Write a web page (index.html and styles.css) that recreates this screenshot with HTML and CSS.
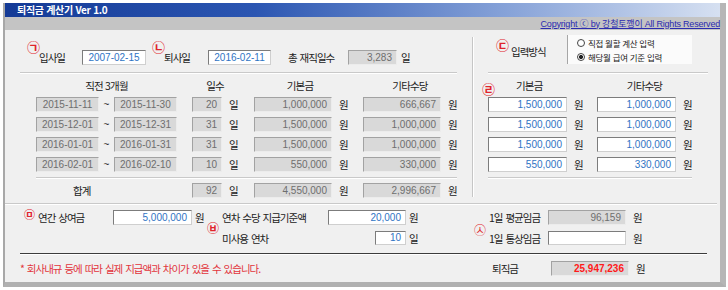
FILE: index.html
```html
<!DOCTYPE html>
<html lang="ko">
<head>
<meta charset="utf-8">
<title>퇴직금 계산기</title>
<link rel="stylesheet" href="styles.css">
</head>
<body>
<div class="window">
  <div class="titlebar">퇴직금 계산기 Ver 1.0</div>
  <div class="menubar"><span class="copy">Copyright ⓒ by 강철토깽이 All Rights Reserved</span></div>
  <div class="content">
    <div class="top">
      <div class="left">
        <div class="r1">
          <span class="mark m1">㉠</span><span class="lbl w43">입사일</span>
          <span class="box inp ctr w64">2007-02-15</span>
          <span class="mark m2">㉡</span><span class="lbl w44">퇴사일</span>
          <span class="box inp ctr w63">2016-02-11</span>
          <span class="lbl total-lbl">총 재직일수</span>
          <span class="box dis w49">3,283</span>
          <span class="unit u-r1">일</span>
        </div>
        <div class="sep sep-l1"></div>
        <div class="ltable">
          <span class="hd hd-period">직전 3개월</span>
          <span class="hd hd-days">일수</span>
          <span class="hd hd-base">기본금</span>
          <span class="hd hd-etc">기타수당</span>

          <span class="box dis ctr">2015-11-11</span><span class="tilde">~</span><span class="box dis ctr">2015-11-30</span><span></span>
          <span class="box dis">20</span><span class="unit">일</span>
          <span class="box dis">1,000,000</span><span class="unit">원</span>
          <span class="box dis">666,667</span><span class="unit">원</span>

          <span class="box dis ctr">2015-12-01</span><span class="tilde">~</span><span class="box dis ctr">2015-12-31</span><span></span>
          <span class="box dis">31</span><span class="unit">일</span>
          <span class="box dis">1,500,000</span><span class="unit">원</span>
          <span class="box dis">1,000,000</span><span class="unit">원</span>

          <span class="box dis ctr">2016-01-01</span><span class="tilde">~</span><span class="box dis ctr">2016-01-31</span><span></span>
          <span class="box dis">31</span><span class="unit">일</span>
          <span class="box dis">1,500,000</span><span class="unit">원</span>
          <span class="box dis">1,000,000</span><span class="unit">원</span>

          <span class="box dis ctr">2016-02-01</span><span class="tilde">~</span><span class="box dis ctr">2016-02-10</span><span></span>
          <span class="box dis">10</span><span class="unit">일</span>
          <span class="box dis">550,000</span><span class="unit">원</span>
          <span class="box dis">330,000</span><span class="unit">원</span>
        </div>
        <div class="sep sep-l2"></div>
        <div class="ltable ltotal">
          <span class="lbl sum-lbl">합계</span>
          <span class="box dis">92</span><span class="unit">일</span>
          <span class="box dis">4,550,000</span><span class="unit">원</span>
          <span class="box dis">2,996,667</span><span class="unit">원</span>
        </div>
      </div>
      <div class="vdiv"></div>
      <div class="right">
        <div class="rtop">
          <span class="mark m3">㉢</span><span class="lbl method-lbl">입력방식</span>
          <div class="radios">
            <div class="radio-row"><span class="rb"></span><span class="rtxt">직접 월할 계산 입력</span></div>
            <div class="radio-row"><span class="rb on"></span><span class="rtxt">해당월 급여 기준 입력</span></div>
          </div>
        </div>
        <div class="sep sep-r1"></div>
        <div class="rtable">
          <span class="hd hd-rbase"><span class="mark m4">㉣</span><span class="hd-txt">기본금</span></span>
          <span class="hd hd-retc">기타수당</span>

          <span class="box inp">1,500,000</span><span class="unit">원</span>
          <span class="box inp">1,000,000</span><span class="unit">원</span>

          <span class="box inp">1,500,000</span><span class="unit">원</span>
          <span class="box inp">1,000,000</span><span class="unit">원</span>

          <span class="box inp">1,500,000</span><span class="unit">원</span>
          <span class="box inp">1,000,000</span><span class="unit">원</span>

          <span class="box inp">550,000</span><span class="unit">원</span>
          <span class="box inp">330,000</span><span class="unit">원</span>
        </div>
        <div class="sep sep-r2"></div>
      </div>
    </div>
    <div class="sep sep-full"></div>
    <div class="lower">
      <div class="colA">
        <span class="mark m5">㉤</span><span class="lbl bonus-lbl">연간 상여금</span>
        <span class="box inp w79">5,000,000</span><span class="unit ua">원</span>
      </div>
      <div class="colB">
        <span class="mark m6">㉥</span>
        <span class="lbl">연차 수당 지급기준액</span>
        <span class="box inp">20,000</span><span class="unit ub">원</span>
        <span class="lbl">미사용 연차</span>
        <span class="box inp w31 short">10</span><span class="unit ub">일</span>
      </div>
      <div class="colC">
        <span class="mark m7">㉦</span>
        <span class="lbl">1일 평균임금</span>
        <span class="box dis">96,159</span><span class="unit uc">원</span>
        <span class="lbl">1일 통상임금</span>
        <span class="box inp short"></span><span class="unit uc">원</span>
      </div>
    </div>
    <div class="darkline"></div>
    <div class="footer">
      <span class="note">* 회사내규 등에 따라 실제 지급액과 차이가 있을 수 있습니다.</span>
      <span class="lbl result-lbl">퇴직금</span>
      <span class="box dis result">25,947,236</span><span class="unit uc">원</span>
    </div>
  </div>
</div>
</body>
</html>
```

FILE: styles.css
```css
* { box-sizing: border-box; }
html, body { margin: 0; padding: 0; }
body {
  background: #ffffff;
  font-family: "Noto Sans CJK KR", "Liberation Sans", sans-serif;
  font-size: 10px;
  color: #222;
}

.window {
  margin: 3px 0 0 3px;
  width: 723px;
  border-left: 2px solid #a8a8a8;
  border-right: 6px solid #b6b6b6;
  border-bottom: 5px solid #b0b0b0;
  background: #f0f0f0;
}

.titlebar {
  height: 14px;
  background: linear-gradient(to right, #143a96 0%, #2b56b2 35%, #86a2d8 70%, #d6e0f1 100%);
  color: #fff;
  font-weight: 700;
  font-size: 10px;
  line-height: 14px;
  padding-left: 12px;
  letter-spacing: -0.3px;
}

.menubar {
  height: 13px;
  background: #c4c4c4;
  display: flex;
  justify-content: flex-end;
  align-items: center;
}
.copy {
  color: #2b2bb0;
  text-decoration: underline;
  font-family: "Liberation Sans", "Noto Sans CJK KR", sans-serif;
  font-size: 9px;
  line-height: 12px;
  letter-spacing: -0.2px;
}

.content { height: 252px; display: flex; flex-direction: column; }
.top { height: 173px; display: flex; flex: none; }
.left { width: 467px; flex: none; }
.vdiv {
  width: 2px;
  margin: 7px 0 6px;
  border-left: 1px solid #c6c6c6;
  border-right: 1px solid #fff;
}
.right { flex: 1; }

/* generic bits */
.lbl {
  font-size: 10.5px;
  line-height: 13px;
  letter-spacing: -1px;
  word-spacing: 1px;
  color: #222;
  white-space: nowrap;
}
.unit {
  font-size: 10.5px;
  line-height: 15px;
  color: #222;
  padding-left: 6px;
}
.mark {
  color: #e0242c;
  font-size: 13px;
  line-height: 12px;
  font-weight: 700;
  width: 12px;
  flex: none;
}
.box {
  display: block;
  height: 15px;
  border: 1px solid;
  font-family: "Liberation Sans", sans-serif;
  font-size: 10px;
  line-height: 13px;
  padding: 0 4px;
  text-align: right;
  white-space: nowrap;
  overflow: hidden;
  flex: none;
}
.inp {
  background: #fff;
  border-color: #7c7c7c #cfcfcf #cfcfcf #7c7c7c;
  color: #2f74c4;
}
.dis {
  background: #d9d9d9;
  border-color: #a2a2a2 #ececec #ececec #a2a2a2;
  color: #6e6e6e;
}
.ctr { text-align: center; padding: 0 2px; }

.sep {
  height: 2px;
  border-top: 1px solid #c9c9c9;
  border-bottom: 1px solid #fff;
  flex: none;
}

/* first row */
.r1 {
  display: flex;
  align-items: center;
  height: 15px;
  margin-top: 20px;
  padding-left: 22px;
}
.r1 .mark { align-self: flex-start; margin-top: -9px; }
.m2 { margin-left: 6px; }
.w43 { width: 43px; }
.w44 { width: 44px; }
.w64 { width: 64px; }
.w63 { width: 63px; }
.w49 { width: 49px; }
.w79 { width: 79px; }
.w31 { width: 31px; justify-self: end; }
.total-lbl { margin-left: 17px; width: 60px; }
.u-r1 { padding-left: 4px; }

.sep-l1 { margin: 7px 0 0 15px; width: 437px; }

.ltable {
  display: grid;
  grid-template-columns: 63px 15px 63px 15px 30px 32px 78px 31px 78px 20px;
  grid-template-rows: 13px repeat(4, 15px);
  row-gap: 5px;
  margin: 5px 0 0 31px;
}
.hd {
  font-size: 10.5px;
  line-height: 13px;
  letter-spacing: -0.8px;
  text-align: center;
  white-space: nowrap;
  color: #222;
}
.hd-period { grid-column: 1 / 4; }
.hd-days { grid-column: 5 / 7; padding-right: 16px; }
.hd-base { grid-column: 7 / 9; padding-right: 17px; }
.hd-etc { grid-column: 9 / 11; padding-right: 4px; }
.tilde {
  text-align: center;
  font-family: "Liberation Sans", sans-serif;
  font-size: 10px;
  line-height: 15px;
  color: #333;
}
.ltable .unit { padding-left: 7px; }

.sep-l2 { margin: 5px 0 0 31px; width: 421px; }
.ltotal { grid-template-rows: 15px; margin-top: 4px; }
.sum-lbl { grid-column: 1 / 5; padding-left: 37px; line-height: 15px; }

/* right pane */
.rtop {
  display: flex;
  align-items: flex-start;
  height: 29px;
  margin-top: 5px;
}
.m3 { margin-left: 22px; margin-top: 4px; }
.method-lbl { margin-left: 3px; margin-top: 11px; width: 56px; line-height: 12px; }
.radios {
  width: 125px;
  height: 29px;
  background: #fbfbfb;
  border-left: 1px solid #a6a6a6;
  padding: 1px 0 0 9px;
}
.radio-row {
  display: flex;
  align-items: center;
  height: 14px;
}
.rb {
  width: 8px;
  height: 8px;
  border: 1px solid #444;
  border-radius: 50%;
  background: #fff;
  margin-right: 3px;
  flex: none;
}
.rb.on { background: radial-gradient(circle, #222 0 1.8px, #fff 2.3px); }
.rtxt {
  font-size: 8.5px;
  line-height: 12px;
  letter-spacing: -0.3px;
  color: #222;
  white-space: nowrap;
}

.sep-r1 { margin: 8px 0 0 14px; width: 220px; }
.rtable {
  display: grid;
  grid-template-columns: 79px 30px 79px 16px;
  grid-template-rows: 13px repeat(4, 15px);
  row-gap: 5px;
  margin: 5px 0 0 14px;
}
.rtable .unit { padding-left: 7px; }
.hd-rbase {
  grid-column: 1 / 3;
  display: flex;
  align-items: center;
  text-align: left;
}
.m4 { margin-left: -6px; align-self: flex-end; margin-bottom: -3px; }
.hd-txt { margin-left: 22px; }
.hd-retc { grid-column: 3 / 5; }
.sep-r2 { margin: 5px 0 0 14px; width: 204px; }

.sep-full { width: 712px; }

/* lower */
.lower {
  height: 48px;
  display: flex;
  align-items: flex-start;
  padding-top: 5px;
  flex: none;
}
.colA {
  display: flex;
  align-items: center;
  height: 15px;
  margin-left: 19px;
}
.m5 { font-size: 11px; width: 10px; line-height: 10px; align-self: flex-start; margin-top: -1px; }
.bonus-lbl { margin-left: 4px; width: 75px; line-height: 15px; }
.ua { padding-left: 3px; width: 16px; }

.colB, .colC {
  display: grid;
  grid-template-rows: 15px 14px;
  row-gap: 6px;
  align-items: center;
}
.colB { grid-template-columns: 14px 106px 78px 16px; }
.colC { grid-template-columns: 15px 59px 78px 16px; margin-left: 52px; }
.short { height: 14px; line-height: 12px; }
.m6, .m7 { grid-row: 1 / 3; grid-column: 1; align-self: center; }
.m6 { font-size: 12px; margin-left: -1px; }
.m7 { font-size: 12px; font-weight: 400; margin-top: 4px; }
.ub { padding-left: 3px; }
.uc { padding-left: 7px; }

.darkline {
  height: 2px;
  margin-left: 15px;
  width: 687px;
  border-top: 1px solid #3c3c3c;
  border-bottom: 1px solid #fff;
  flex: none;
}

.footer {
  height: 27px;
  display: flex;
  align-items: center;
  flex: none;
}
.note {
  flex: 0 0 472px;
  padding-left: 15px;
  color: #e2343c;
  font-size: 10.5px;
  line-height: 13px;
  letter-spacing: -1px;
  word-spacing: 1px;
  white-space: nowrap;
}
.result-lbl { margin-left: 15px; width: 59px; }
.result {
  width: 78px;
  color: #ff1a1a;
  font-weight: 700;
  font-size: 10px;
}
```
